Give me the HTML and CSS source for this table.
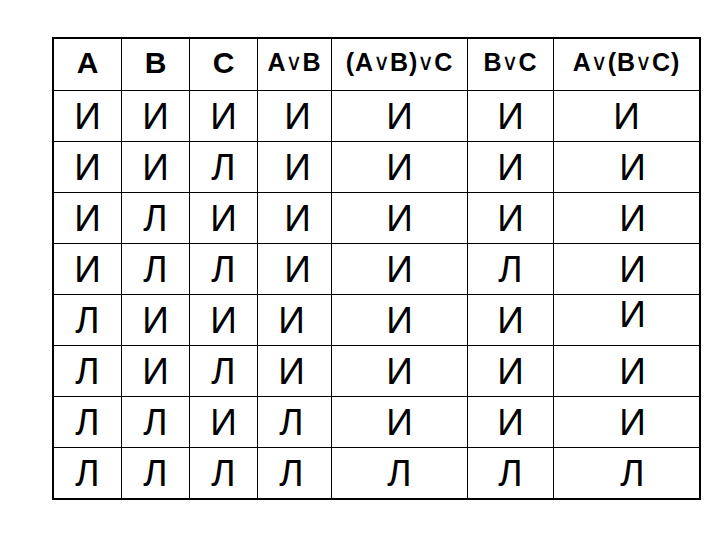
FILE: index.html
```html
<!DOCTYPE html>
<html lang="ru">
<head>
<meta charset="utf-8">
<title>Таблица истинности</title>
<link rel="stylesheet" href="styles.css">
</head>
<body>
<div class="page">
  <div class="truth">
    <div class="cell head big">A</div>
    <div class="cell head big">B</div>
    <div class="cell head big">C</div>
    <div class="cell head small">A<span class="op">∨</span>B</div>
    <div class="cell head small">(A<span class="op">∨</span>B)<span class="op">∨</span>C</div>
    <div class="cell head small">B<span class="op">∨</span>C</div>
    <div class="cell head small">A<span class="op">∨</span>(B<span class="op">∨</span>C)</div>

    <div class="cell">И</div><div class="cell">И</div><div class="cell">И</div><div class="cell sr">И</div><div class="cell">И</div><div class="cell">И</div><div class="cell">И</div>
    <div class="cell">И</div><div class="cell">И</div><div class="cell">Л</div><div class="cell sr">И</div><div class="cell">И</div><div class="cell">И</div><div class="cell srr">И</div>
    <div class="cell">И</div><div class="cell">Л</div><div class="cell">И</div><div class="cell sr">И</div><div class="cell">И</div><div class="cell">И</div><div class="cell srr">И</div>
    <div class="cell">И</div><div class="cell">Л</div><div class="cell">Л</div><div class="cell sr">И</div><div class="cell">И</div><div class="cell">Л</div><div class="cell srr">И</div>
    <div class="cell">Л</div><div class="cell">И</div><div class="cell">И</div><div class="cell sl">И</div><div class="cell">И</div><div class="cell">И</div><div class="cell srr up">И</div>
    <div class="cell">Л</div><div class="cell">И</div><div class="cell">Л</div><div class="cell sl">И</div><div class="cell">И</div><div class="cell">И</div><div class="cell srr">И</div>
    <div class="cell">Л</div><div class="cell">Л</div><div class="cell">И</div><div class="cell sl">Л</div><div class="cell">И</div><div class="cell">И</div><div class="cell srr">И</div>
    <div class="cell">Л</div><div class="cell">Л</div><div class="cell">Л</div><div class="cell sl">Л</div><div class="cell">Л</div><div class="cell">Л</div><div class="cell srr">Л</div>
  </div>
</div>
</body>
</html>
```

FILE: styles.css
```css
html, body {
  margin: 0;
  padding: 0;
  background: #ffffff;
}

.page {
  padding: 37px 0 0 52px;
}

.truth {
  display: grid;
  grid-template-columns: 67px 67px 67px 73px 135px 85px 145px;
  grid-template-rows: 51px repeat(8, 50px);
  gap: 1px;
  width: max-content;
  background: #000000;
  border: 2px solid #000000;
  font-family: "Liberation Sans", Arial, sans-serif;
  color: #000000;
}

.cell {
  background: #ffffff;
  display: flex;
  align-items: center;
  justify-content: center;
  font-size: 37px;
  line-height: 1;
}

.head {
  font-weight: bold;
}

.head.big {
  font-size: 30px;
  padding-bottom: 4px;
}

.head.small {
  font-size: 25px;
  padding-bottom: 5px;
  letter-spacing: 1px;
}

.op {
  font-family: "DejaVu Sans", sans-serif;
  font-weight: normal;
  font-size: 23px;
  margin: 0 -1px;
}

.sr {
  padding-left: 6px;
}

.sl {
  padding-right: 6px;
}

.srr {
  padding-left: 12px;
}

.up {
  padding-bottom: 12px;
}
```
